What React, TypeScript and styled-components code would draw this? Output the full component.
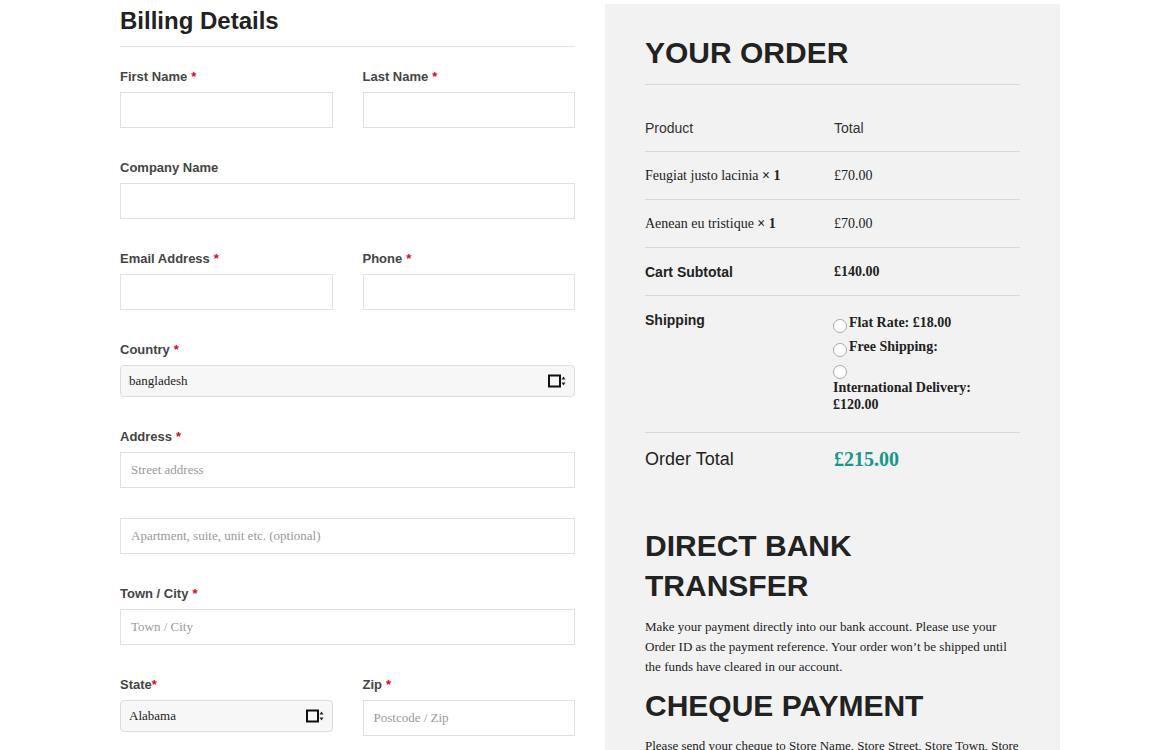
import React from "react";
import styled, { createGlobalStyle } from "styled-components";

const Global = createGlobalStyle`
  html, body { margin: 0; padding: 0; background: #fff; }
  body { font-family: "Liberation Sans", Arial, sans-serif; color: #333; }
  * { box-sizing: border-box; }
`;

const Page = styled.div`
  display: grid;
  grid-template-columns: 455px 455px;
  column-gap: 30px;
  padding: 4px 0 0 120px;
  align-items: start;
`;

const Billing = styled.section`
  display: flex;
  flex-direction: column;
`;

const BillingTitle = styled.h3`
  margin: 2px 0 22px;
  padding: 1px 0 11px;
  font: bold 24px/28px "Liberation Sans", Arial, sans-serif;
  color: #222;
  border-bottom: 1px solid #e3e3e3;
`;

const Row = styled.div`
  display: grid;
  grid-template-columns: 1fr 1fr;
  column-gap: 30px;
`;

const Field = styled.div<{ $gap?: number }>`
  display: flex;
  flex-direction: column;
  margin-bottom: ${(p) => (p.$gap ?? 32)}px;
`;

const Label = styled.label`
  display: block;
  font: bold 13px/16px "Liberation Sans", Arial, sans-serif;
  color: #444;
  margin-bottom: 7px;
`;

const Req = styled.span<{ $tight?: boolean }>`
  color: #e2001a;
  margin-left: ${(p) => (p.$tight ? 0 : 4)}px;
`;

const Input = styled.input`
  height: 36px;
  width: 100%;
  border: 1px solid #e0e0e0;
  background: #fff;
  padding: 0 10px;
  font: 13px "Liberation Serif", "Times New Roman", serif;
  color: #222;
  outline: none;
  &::placeholder { color: #999; }
`;

const Select = styled.div`
  height: 32px;
  display: flex;
  align-items: center;
  justify-content: space-between;
  border: 1px solid #dcdcdc;
  border-radius: 4px;
  background: #f7f7f7;
  padding: 0 6px 0 8px;
  font: 13px "Liberation Serif", "Times New Roman", serif;
  color: #222;
`;

const SelectIcon = () => (
  <svg width="20" height="14" viewBox="0 0 20 14">
    <rect x="1" y="1.5" width="11" height="11" fill="none" stroke="#111" strokeWidth="2" />
    <path d="M13.5 5.5 L15.5 2.5 L17.5 5.5 Z" fill="#222" />
    <path d="M13.5 8.5 L15.5 11.5 L17.5 8.5 Z" fill="#222" />
  </svg>
);

const Order = styled.aside`
  background: #f2f2f2;
  padding: 31px 40px 40px;
  min-height: 760px;
`;

const OrderTitle = styled.h3`
  margin: 0 0 19px;
  padding: 0 0 13px;
  font: bold 30px/36px "Liberation Sans", Arial, sans-serif;
  color: #222;
  border-bottom: 1px solid #d9d9d9;
`;

const TableRow = styled.div<{ $pt?: number; $pb?: number; $noBorder?: boolean }>`
  display: grid;
  grid-template-columns: 189px 1fr;
  padding: ${(p) => p.$pt ?? 16}px 0 ${(p) => p.$pb ?? 15}px;
  border-bottom: ${(p) => (p.$noBorder ? "none" : "1px solid #d9d9d9")};
  align-items: start;
`;

const HeadCell = styled.div`
  font: 14px/16px "Liberation Sans", Arial, sans-serif;
  color: #333;
`;

const SansBold = styled.div`
  font: bold 14px/16px "Liberation Sans", Arial, sans-serif;
  color: #222;
`;

const SerifCell = styled.div<{ $bold?: boolean }>`
  font: ${(p) => (p.$bold ? "bold" : "normal")} 14px/16px "Liberation Serif", "Times New Roman", serif;
  color: #222;
  b { font-weight: bold; }
`;

const Options = styled.div`
  display: flex;
  flex-direction: column;
  margin: -1px 0 0 -1px;
`;

const Option = styled.div`
  display: flex;
  align-items: center;
  height: 24px;
  font: bold 14px/16px "Liberation Serif", "Times New Roman", serif;
  color: #222;
`;

const RadioLine = styled.div`
  display: flex;
  align-items: center;
  height: 20px;
`;

const WrapLabel = styled.div`
  font: bold 14px/17px "Liberation Serif", "Times New Roman", serif;
  color: #222;
`;

const Radio = styled.span`
  display: inline-block;
  width: 14px;
  height: 14px;
  border-radius: 50%;
  border: 1px solid #a8a8a8;
  background: #fff;
  margin: 5px 2px 0 0;
  flex: none;
`;

const TotalLabel = styled.div`
  font: 18px/22px "Liberation Sans", Arial, sans-serif;
  color: #222;
`;

const TotalValue = styled.div`
  font: bold 20px/22px "Liberation Serif", "Times New Roman", serif;
  color: #16978a;
`;

const PayTitle = styled.h3<{ $mt: number }>`
  margin: ${(p) => p.$mt}px 0 0;
  font: bold 30px/40px "Liberation Sans", Arial, sans-serif;
  color: #222;
`;

const PayText = styled.p<{ $mt: number }>`
  margin: ${(p) => p.$mt}px 0 0;
  font: 13px/20px "Liberation Serif", "Times New Roman", serif;
  color: #222;
`;

export default function App() {
  return (
    <>
      <Global />
      <Page>
        <Billing>
          <BillingTitle>Billing Details</BillingTitle>
          <Row>
            <Field>
              <Label>First Name<Req>*</Req></Label>
              <Input />
            </Field>
            <Field>
              <Label>Last Name<Req>*</Req></Label>
              <Input />
            </Field>
          </Row>
          <Field>
            <Label>Company Name</Label>
            <Input />
          </Field>
          <Row>
            <Field>
              <Label>Email Address<Req>*</Req></Label>
              <Input />
            </Field>
            <Field>
              <Label>Phone<Req>*</Req></Label>
              <Input />
            </Field>
          </Row>
          <Field>
            <Label>Country<Req>*</Req></Label>
            <Select>
              <span>bangladesh</span>
              <SelectIcon />
            </Select>
          </Field>
          <Field $gap={30}>
            <Label>Address<Req>*</Req></Label>
            <Input placeholder="Street address" />
          </Field>
          <Field>
            <Input placeholder="Apartment, suite, unit etc. (optional)" />
          </Field>
          <Field>
            <Label>Town / City<Req>*</Req></Label>
            <Input placeholder="Town / City" />
          </Field>
          <Row>
            <Field>
              <Label>State<Req $tight>*</Req></Label>
              <Select>
                <span>Alabama</span>
                <SelectIcon />
              </Select>
            </Field>
            <Field>
              <Label>Zip<Req>*</Req></Label>
              <Input placeholder="Postcode / Zip" />
            </Field>
          </Row>
        </Billing>

        <Order>
          <OrderTitle>YOUR ORDER</OrderTitle>
          <TableRow>
            <HeadCell>Product</HeadCell>
            <HeadCell>Total</HeadCell>
          </TableRow>
          <TableRow>
            <SerifCell>Feugiat justo lacinia <b>× 1</b></SerifCell>
            <SerifCell>£70.00</SerifCell>
          </TableRow>
          <TableRow>
            <SerifCell>Aenean eu tristique <b>× 1</b></SerifCell>
            <SerifCell>£70.00</SerifCell>
          </TableRow>
          <TableRow>
            <SansBold>Cart Subtotal</SansBold>
            <SerifCell $bold>£140.00</SerifCell>
          </TableRow>
          <TableRow $pb={19}>
            <SansBold>Shipping</SansBold>
            <Options>
              <Option><Radio />Flat Rate: £18.00</Option>
              <Option><Radio />Free Shipping:</Option>
              <RadioLine><Radio /></RadioLine>
              <WrapLabel>International Delivery:<br />£120.00</WrapLabel>
            </Options>
          </TableRow>
          <TableRow $pt={15} $noBorder>
            <TotalLabel>Order Total</TotalLabel>
            <TotalValue>£215.00</TotalValue>
          </TableRow>
          <PayTitle $mt={41}>DIRECT BANK<br />TRANSFER</PayTitle>
          <PayText $mt={11}>
            Make your payment directly into our bank account. Please use your Order ID as the payment reference. Your order won’t be shipped until the funds have cleared in our account.
          </PayText>
          <PayTitle $mt={9}>CHEQUE PAYMENT</PayTitle>
          <PayText $mt={10}>
            Please send your cheque to Store Name, Store Street, Store Town, Store State / County, Store Postcode.
          </PayText>
        </Order>
      </Page>
    </>
  );
}
